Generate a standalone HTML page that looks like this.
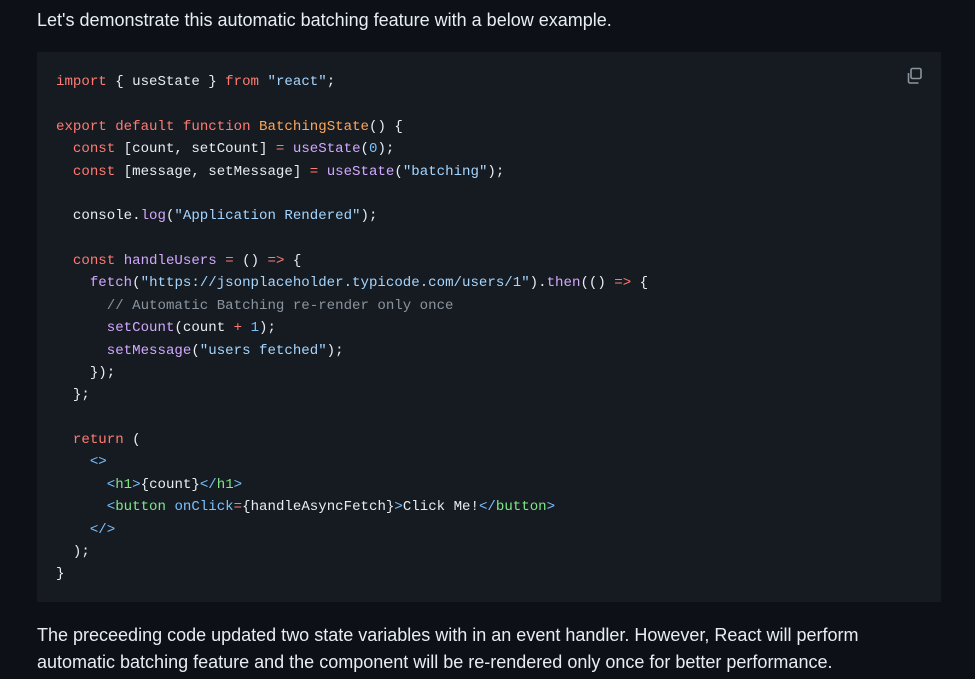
<!DOCTYPE html>
<html><head><meta charset="utf-8"><style>
html,body{margin:0;padding:0;background:#0d1117;width:975px;height:679px;overflow:hidden}
body{font-family:"Liberation Sans",sans-serif;color:#e6edf3}
.p{position:absolute;left:37px;font-size:18px;white-space:nowrap;line-height:20px}
.code{position:absolute;left:37px;top:52px;width:904px;height:550px;background:#161b22}
pre{margin:0;position:absolute;left:56px;top:71px;font-family:"Liberation Mono",monospace;font-size:14.1px;line-height:22.37px;color:#e6edf3}
.k{color:#ff7b72}.f{color:#d2a8ff}.s{color:#a5d6ff}.o{color:#ffa657}.n{color:#79c0ff}.t{color:#7ee787}.c{color:#8b949e}
</style></head><body>
<div class="p" style="top:10px">Let's demonstrate this automatic batching feature with a below example.</div>
<div class="code"></div>
<svg style="position:absolute;left:904px;top:66px" width="20" height="20" viewBox="0 0 20 20" fill="none" stroke="#8b949e" stroke-width="1.6"><rect x="7" y="2.5" width="10" height="10" rx="1.5"/><path d="M4.5 7v8.5a1.5 1.5 0 0 0 1.5 1.5h8.5"/></svg>
<pre><span class="k">import</span> { useState } <span class="k">from</span> <span class="s">"react"</span>;

<span class="k">export</span> <span class="k">default</span> <span class="k">function</span> <span class="o">BatchingState</span>() {
  <span class="k">const</span> [count, setCount] <span class="k">=</span> <span class="f">useState</span>(<span class="n">0</span>);
  <span class="k">const</span> [message, setMessage] <span class="k">=</span> <span class="f">useState</span>(<span class="s">"batching"</span>);

  console.<span class="f">log</span>(<span class="s">"Application Rendered"</span>);

  <span class="k">const</span> <span class="f">handleUsers</span> <span class="k">=</span> () <span class="k">=&gt;</span> {
    <span class="f">fetch</span>(<span class="s">"https://jsonplaceholder.typicode.com/users/1"</span>).<span class="f">then</span>(() <span class="k">=&gt;</span> {
      <span class="c">// Automatic Batching re-render only once</span>
      <span class="f">setCount</span>(count <span class="k">+</span> <span class="n">1</span>);
      <span class="f">setMessage</span>(<span class="s">"users fetched"</span>);
    });
  };

  <span class="k">return</span> (
    <span class="n">&lt;&gt;</span>
      <span class="n">&lt;</span><span class="t">h1</span><span class="n">&gt;</span>{count}<span class="n">&lt;/</span><span class="t">h1</span><span class="n">&gt;</span>
      <span class="n">&lt;</span><span class="t">button</span> <span class="n">onClick</span><span class="k">=</span>{handleAsyncFetch}<span class="n">&gt;</span>Click Me!<span class="n">&lt;/</span><span class="t">button</span><span class="n">&gt;</span>
    <span class="n">&lt;/&gt;</span>
  );
}</pre>
<div class="p" style="top:10px;visibility:hidden"></div>
<div class="p" style="top:625px">The preceeding code updated two state variables with in an event handler. However, React will perform</div>
<div class="p" style="top:652px">automatic batching feature and the component will be re-rendered only once for better performance.</div>
</body></html>
